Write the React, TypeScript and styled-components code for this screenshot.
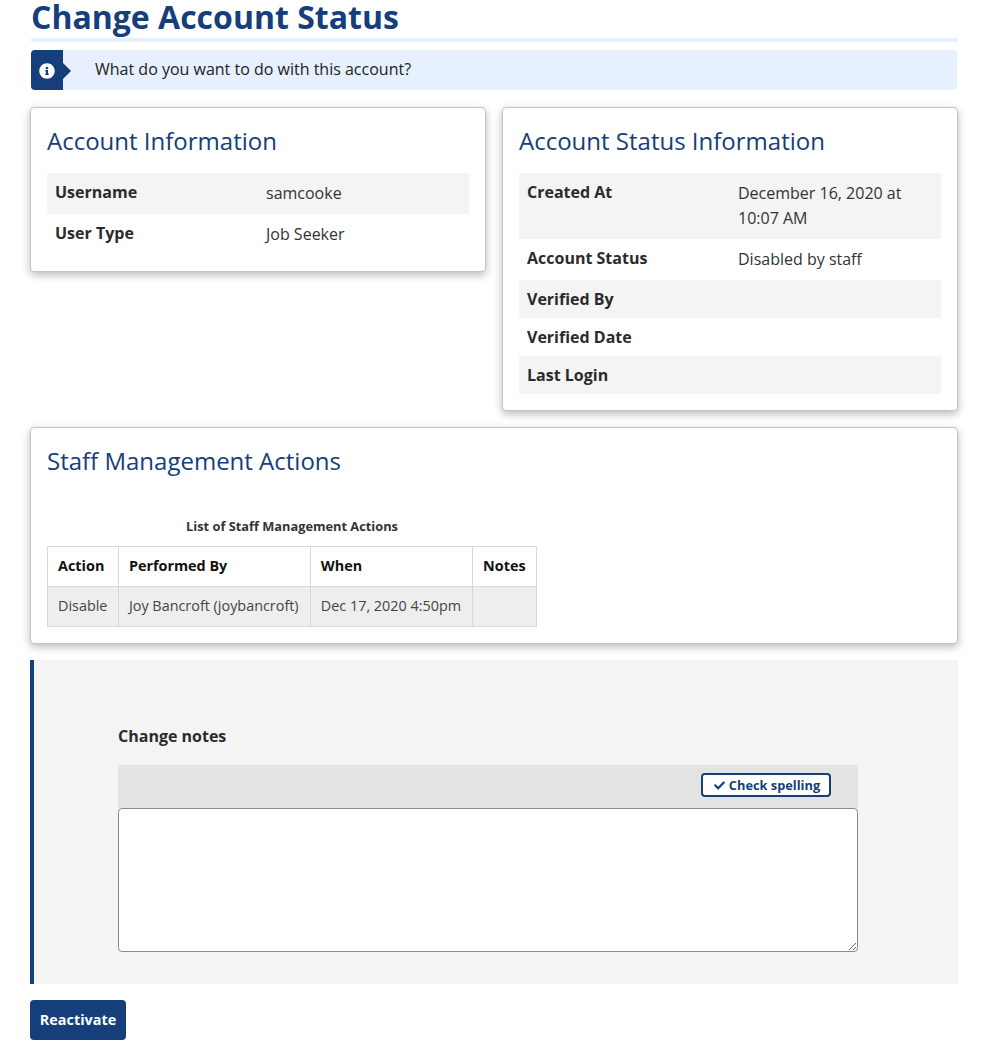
import { createGlobalStyle } from "styled-components";
import styled from "styled-components";
import { FaCheck, FaInfoCircle } from "react-icons/fa";

const navy = "#153e7a";

const GlobalStyle = createGlobalStyle`
  html, body {
    margin: 0;
    background: #fff;
  }
  body {
    font-family: "Open Sans", "Noto Sans", sans-serif;
    font-size: 16px;
    line-height: 1.6;
    color: #333;
  }
  * {
    box-sizing: border-box;
  }
`;

const Page = styled.main`
  width: 982px;
  padding: 0 24px 16px 30px;
`;

const Title = styled.h1`
  margin: 0 0 8px 1px;
  height: 42px;
  font-size: 32px;
  line-height: 32px;
  padding-top: 1px;
  font-weight: 700;
  color: ${navy};
  border-bottom: 4px solid #e6f0fe;
`;

const Alert = styled.div`
  position: relative;
  display: flex;
  align-items: center;
  height: 40px;
  margin: 0 1px 17px;
  padding-left: 64px;
  background: #e6f0fe;
  border-radius: 4px;
  color: #222;
`;

const AlertBadge = styled.span`
  position: absolute;
  left: 0;
  top: 0;
  display: flex;
  align-items: center;
  justify-content: center;
  width: 32px;
  height: 40px;
  background: ${navy};
  color: #fff;
  border-radius: 4px 0 0 4px;
  font-size: 16px;
  padding-top: 1px;

  &::after {
    content: "";
    position: absolute;
    left: 32px;
    top: 13px;
    border-left: 8px solid ${navy};
    border-top: 8px solid transparent;
    border-bottom: 8px solid transparent;
  }
`;

const CardRow = styled.div`
  display: grid;
  grid-template-columns: 456px 456px;
  gap: 16px;
  align-items: start;
  margin-bottom: 16px;
`;

const Card = styled.section`
  background: #fff;
  border: 1px solid #c4c4c4;
  border-radius: 4px;
  box-shadow: 0 3px 8px rgba(0, 0, 0, 0.28);
  padding: 16px;
`;

const WideCard = styled(Card)`
  margin-bottom: 16px;
`;

const CardTitle = styled.h2`
  margin: 0 0 15px;
  font-size: 24px;
  line-height: 34px;
  font-weight: 400;
  color: ${navy};
`;

const Details = styled.dl`
  margin: 0;
`;

const DetailRow = styled.div`
  display: grid;
  grid-template-columns: 50% 50%;

  &:nth-child(odd) {
    background: #f4f4f4;
  }
`;

const DetailKey = styled.dt`
  padding: 6px 8px;
  line-height: 26px;
  font-weight: 700;
  color: #2b2b2b;
`;

const DetailValue = styled.dd`
  margin: 0;
  min-height: 41px;
  padding: 7.7px 8px 7.1px;
  color: #333;
`;

const TableWrap = styled.div`
  width: 490px;
  padding-top: 24px;
`;

const ActionsTable = styled.table`
  width: 490px;
  border-collapse: collapse;
  font-size: 14.4px;
  line-height: 20px;

  caption {
    height: 29px;
    padding: 0 0 9px;
    font-size: 12.8px;
    line-height: 18px;
    font-weight: 700;
    color: #333;
  }

  th,
  td {
    height: 40px;
    padding: 9px 10px;
    border: 1px solid #d9d9d9;
    text-align: left;
    white-space: nowrap;
  }

  th {
    font-weight: 700;
    color: #111;
    background: #fff;
  }

  td {
    color: #444;
    background: #eee;
  }
`;

const NotesPanel = styled.section`
  height: 324px;
  margin-bottom: 16px;
  padding: 64px 100px 0 84px;
  background: #f4f4f4;
  border-left: 4px solid ${navy};
`;

const NotesLabel = styled.label`
  display: block;
  height: 41px;
  font-weight: 700;
  color: #2b2b2b;
`;

const SpellBar = styled.div`
  display: flex;
  align-items: center;
  justify-content: flex-end;
  height: 43px;
  padding: 0 27px 2px 0;
  background: #e3e3e3;
`;

const SpellButton = styled.button`
  display: flex;
  align-items: center;
  justify-content: center;
  gap: 4px;
  width: 130px;
  height: 24px;
  padding: 0 0 0 2px;
  background: #fff;
  border: 2px solid ${navy};
  border-radius: 4px;
  color: ${navy};
  font-family: inherit;
  font-size: 12.8px;
  font-weight: 700;
  line-height: 1;
`;

const NotesInput = styled.textarea`
  display: block;
  width: 740px;
  height: 144px;
  background: #fff;
  border: 1px solid #8a8a8a;
  border-radius: 4px;
  resize: vertical;
  font-family: inherit;
`;

const SubmitButton = styled.button`
  display: block;
  width: 96px;
  height: 40px;
  padding: 0;
  background: ${navy};
  border: none;
  border-radius: 4px;
  color: #fff;
  font-family: inherit;
  font-size: 14.4px;
  font-weight: 700;
`;

const accountRows = [
  ["Username", "samcooke"],
  ["User Type", "Job Seeker"],
];

const statusRows = [
  ["Created At", "December 16, 2020 at 10:07 AM"],
  ["Account Status", "Disabled by staff"],
  ["Verified By", ""],
  ["Verified Date", ""],
  ["Last Login", ""],
];

function DetailList({ rows }: { rows: string[][] }) {
  return (
    <Details>
      {rows.map(([key, value]) => (
        <DetailRow key={key}>
          <DetailKey>{key}</DetailKey>
          {value && <DetailValue>{value}</DetailValue>}
        </DetailRow>
      ))}
    </Details>
  );
}

export default function App() {
  return (
    <Page>
      <GlobalStyle />
      <Title>Change Account Status</Title>
      <Alert>
        <AlertBadge>
          <FaInfoCircle />
        </AlertBadge>
        What do you want to do with this account?
      </Alert>
      <CardRow>
        <Card>
          <CardTitle>Account Information</CardTitle>
          <DetailList rows={accountRows} />
        </Card>
        <Card>
          <CardTitle>Account Status Information</CardTitle>
          <DetailList rows={statusRows} />
        </Card>
      </CardRow>
      <WideCard>
        <CardTitle>Staff Management Actions</CardTitle>
        <TableWrap>
          <ActionsTable>
            <caption>List of Staff Management Actions</caption>
            <thead>
              <tr>
                <th>Action</th>
                <th>Performed By</th>
                <th>When</th>
                <th>Notes</th>
              </tr>
            </thead>
            <tbody>
              <tr>
                <td>Disable</td>
                <td>Joy Bancroft (joybancroft)</td>
                <td>Dec 17, 2020 4:50pm</td>
                <td></td>
              </tr>
            </tbody>
          </ActionsTable>
        </TableWrap>
      </WideCard>
      <NotesPanel>
        <NotesLabel htmlFor="notes">Change notes</NotesLabel>
        <SpellBar>
          <SpellButton type="button">
            <FaCheck size={11} />
            Check spelling
          </SpellButton>
        </SpellBar>
        <NotesInput id="notes" />
      </NotesPanel>
      <SubmitButton type="button">Reactivate</SubmitButton>
    </Page>
  );
}
